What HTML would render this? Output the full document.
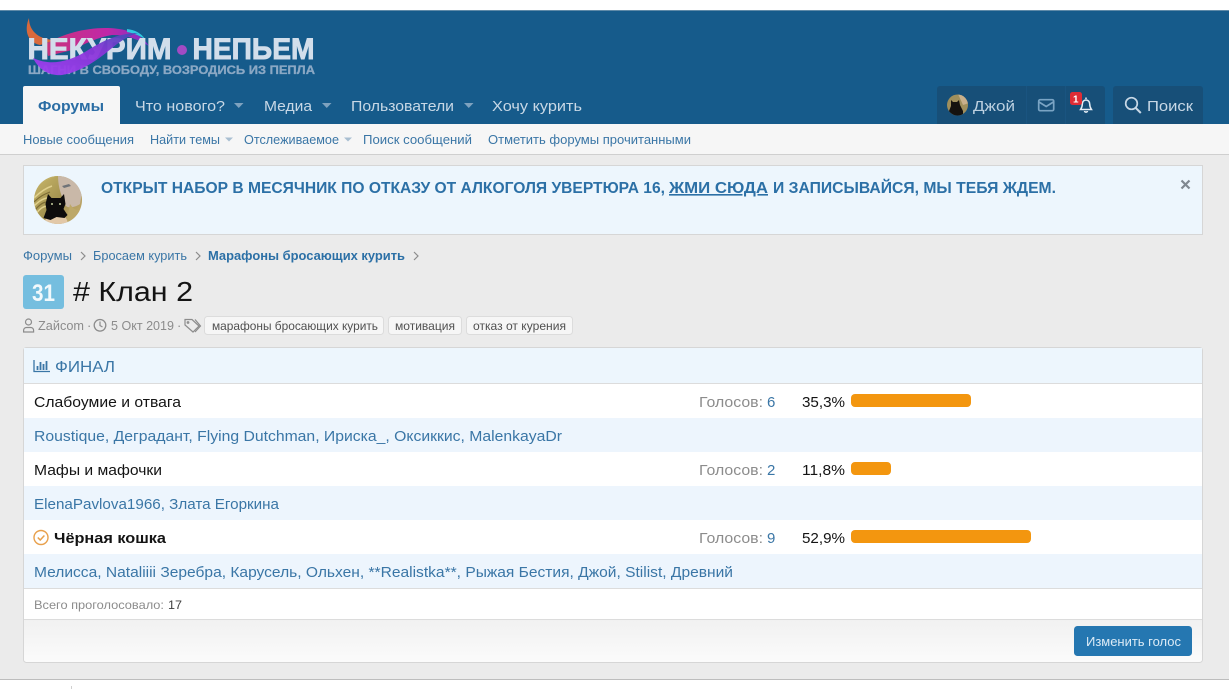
<!DOCTYPE html>
<html lang="ru"><head><meta charset="utf-8"><title>Клан 2</title>
<style>
html,body{margin:0;padding:0;width:1229px;height:689px;overflow:hidden;background:#fff}
svg{display:block}
text{font-family:"Liberation Sans","Noto Sans CJK SC",sans-serif;white-space:pre}
</style></head><body>
<svg width="1229" height="689" viewBox="0 0 1229 689" xmlns="http://www.w3.org/2000/svg">
<defs>
<linearGradient id="sw" x1="0" y1="1" x2="1" y2="0"><stop offset="0" stop-color="#a040f4"/><stop offset=".6" stop-color="#8a35d8"/><stop offset="1" stop-color="#3f4fb4"/></linearGradient>
<linearGradient id="pk" x1="0" y1="0" x2="1" y2="0"><stop offset="0" stop-color="#c8347c"/><stop offset=".6" stop-color="#c028a8"/><stop offset="1" stop-color="#7a30c8"/></linearGradient>
<linearGradient id="ft" x1="0" y1="0" x2="0" y2="1"><stop offset="0" stop-color="#f1f1f1"/><stop offset="1" stop-color="#fbfbfb"/></linearGradient>
<linearGradient id="hair" x1="0" y1="0" x2="1" y2="1"><stop offset="0" stop-color="#c9b76a"/><stop offset=".5" stop-color="#a49350"/><stop offset="1" stop-color="#c9ae72"/></linearGradient>
<clipPath id="av"><circle cx="58" cy="200" r="24"/></clipPath>
<clipPath id="av2"><circle cx="957.500" cy="105" r="10.500"/></clipPath>
</defs>

<rect x="0" y="0" width="1229" height="689" fill="#ebebeb"/>
<rect x="0" y="0" width="1229" height="10" fill="#fff"/>
<rect x="0" y="10" width="1229" height="114" fill="#165b8b"/>
<rect x="0" y="10" width="1229" height="1" fill="#5f8aa8"/>

<!-- logo -->
<text x="28" y="74" font-size="12" font-weight="700" fill="#8ba8c4" stroke="#8ba8c4" stroke-width=".3" textLength="287" lengthAdjust="spacingAndGlyphs">ШАГНИ В СВОБОДУ, ВОЗРОДИСЬ ИЗ ПЕПЛА</text>
<path d="M29 18C24 30 27 42 40 45L56 40C40 40 29 32 29 18Z" fill="#d8693c"/>
<path d="M46 44C62 34 85 28 105 28C125 28 141 33 149 46C136 38 125 35 112 35C98 37 85 44 72 50L48 56Z" fill="url(#pk)"/>
<path d="M127 29C135 30 141 33 145 39C138 35 133 33 127 32Z" fill="#2fc8e0"/>
<g font-size="30" font-weight="700" fill="#d2deeb" stroke="#d2deeb" stroke-width=".9">
<text x="27.500" y="59" textLength="144" lengthAdjust="spacingAndGlyphs">НЕКУРИМ</text>
<text x="192.500" y="59" textLength="122" lengthAdjust="spacingAndGlyphs">НЕПЬЕМ</text>
</g>
<circle cx="182" cy="50" r="5" fill="#a24bc4"/>
<path d="M33 58C40 72 52 76 62 75C82 72 100 58 112 48C122 40 130 35 138 33C118 33 100 42 85 52C68 62 50 66 33 58Z" fill="url(#sw)" opacity=".95"/>

<!-- nav -->
<path d="M23 124V88a2 2 0 0 1 2-2H118a2 2 0 0 1 2 2V124Z" fill="#f6f6f6"/>
<text x="38" y="111" font-size="15" font-weight="700" fill="#2a6da4" textLength="66" lengthAdjust="spacingAndGlyphs">Форумы</text>
<g font-size="15" fill="#c8d8e6">
<text x="135" y="111" textLength="90" lengthAdjust="spacingAndGlyphs">Что нового?</text>
<text x="264" y="111" textLength="48" lengthAdjust="spacingAndGlyphs">Медиа</text>
<text x="351" y="111" textLength="103" lengthAdjust="spacingAndGlyphs">Пользователи</text>
<text x="492" y="111" textLength="90" lengthAdjust="spacingAndGlyphs">Хочу курить</text>
</g>
<g fill="#7ea2bf"><path d="M234 103h9.500l-4.750 5Z"/><path d="M322 103h9.500l-4.750 5Z"/><path d="M464 103h9.500l-4.750 5Z"/></g>

<!-- user box -->
<path d="M937 124V89a3 3 0 0 1 3-3H1102a3 3 0 0 1 3 3V124Z" fill="#174f78"/>
<path d="M1113 124V89a3 3 0 0 1 3-3H1200a3 3 0 0 1 3 3V124Z" fill="#174f78"/>
<rect x="1026" y="86" width="1" height="38" fill="#1a5480"/>
<rect x="1065" y="86" width="1" height="38" fill="#1a5480"/>
<g clip-path="url(#av2)">
<rect x="946" y="94" width="23" height="23" fill="#a08f5c"/>
<path d="M958 94h11v9l-6 2Z" fill="#c9b08c"/>
<path d="M951 100l2 2h4l2-2 1 5 3 6v6h-14v-6l2-5Z" fill="#15120f"/>
</g>
<text x="973" y="111" font-size="15" fill="#bcd0e0" textLength="42" lengthAdjust="spacingAndGlyphs">Джой</text>
<rect x="1038.700" y="99.700" width="15" height="11" rx="1.500" fill="none" stroke="#7aa4c4" stroke-width="1.700"/>
<path d="M1039 102l7.200 4.500 7.200-4.500" fill="none" stroke="#7aa4c4" stroke-width="1.700"/>
<path d="M1086 97.500v1.500m-5.500 10.500c1-1.500 1.800-2.500 1.800-5.500c0-2.500 1.700-4 3.700-4s3.700 1.500 3.700 4c0 3 .8 4 1.800 5.500Zm4 1.500c.3 1.500 2.700 1.500 3 0" fill="none" stroke="#e6eef5" stroke-width="1.500"/>
<rect x="1070" y="92" width="12" height="13" rx="2.500" fill="#df2c35"/>
<text x="1073" y="102.500" font-size="10" font-weight="700" fill="#fff" textLength="5.500" lengthAdjust="spacingAndGlyphs">1</text>
<circle cx="1131.500" cy="103.500" r="5.800" fill="none" stroke="#c8d8e6" stroke-width="1.700"/>
<path d="M1135.800 108l5 5" stroke="#c8d8e6" stroke-width="2"/>
<text x="1147" y="111" font-size="15" fill="#c8d8e6" textLength="46" lengthAdjust="spacingAndGlyphs">Поиск</text>

<!-- subnav -->
<rect x="0" y="124" width="1229" height="30" fill="#f6f6f6"/>
<rect x="0" y="154" width="1229" height="1" fill="#cfcfcf"/>
<g font-size="13" fill="#3a76a6">
<text x="23" y="144" textLength="111" lengthAdjust="spacingAndGlyphs">Новые сообщения</text>
<text x="150" y="144" textLength="70" lengthAdjust="spacingAndGlyphs">Найти темы</text>
<text x="244" y="144" textLength="95" lengthAdjust="spacingAndGlyphs">Отслеживаемое</text>
<text x="363" y="144" textLength="109" lengthAdjust="spacingAndGlyphs">Поиск сообщений</text>
<text x="488" y="144" textLength="203" lengthAdjust="spacingAndGlyphs">Отметить форумы прочитанными</text>
</g>
<g fill="#a9bfd1"><path d="M225 137.500h8l-4 4Z"/><path d="M344 137.500h8l-4 4Z"/></g>

<!-- notice -->
<rect x="23.500" y="165.500" width="1179" height="69" fill="#edf6fd" stroke="#d6d6d6"/>
<g clip-path="url(#av)">
<rect x="34" y="176" width="48" height="48" fill="url(#hair)"/>
<path d="M34 190C42 182 50 178 58 176H34Z" fill="#bfae66"/>
<path d="M34 198C40 192 46 188 52 186M34 206C40 200 44 198 48 198M36 214C40 208 44 206 48 206" fill="none" stroke="#e0d08c" stroke-width="1.500"/>
<path d="M34 202C40 196 45 194 50 192M35 210C40 204 44 202 47 202" fill="none" stroke="#7d6c34" stroke-width="1.200"/>
<path d="M58 176C68 176 78 182 82 192L80 204C74 208 68 208 66 206C62 198 58 188 58 176Z" fill="#c9b8a8"/>
<path d="M62 186l7-2 2 2-7 2Z" fill="#6f7378"/>
<path d="M70 204C74 210 78 212 82 208V224H66Z" fill="#bda868"/>
<path d="M44 224c1-7 6-9 14-9 7 0 9 3 10 9Z" fill="#e2c8a8"/>
<path d="M48 194l3.500 4h9l3.500-4 1.500 10-2 5 4 6-3 3-8-1-6 3-7-2 3-8-1-6Z" fill="#0e0c0c"/>
<circle cx="52" cy="204" r="1" fill="#c8d0a0"/><circle cx="60" cy="204" r="1" fill="#c8d0a0"/>
</g>
<g font-size="16" font-weight="700" fill="#2c70a6">
<text x="101" y="193" textLength="564" lengthAdjust="spacingAndGlyphs">ОТКРЫТ НАБОР В МЕСЯЧНИК ПО ОТКАЗУ ОТ АЛКОГОЛЯ УВЕРТЮРА 16,</text>
<text x="669" y="193" textLength="99" lengthAdjust="spacingAndGlyphs" text-decoration="underline">ЖМИ СЮДА</text>
<text x="773" y="193" textLength="283" lengthAdjust="spacingAndGlyphs">И ЗАПИСЫВАЙСЯ, МЫ ТЕБЯ ЖДЕМ.</text>
</g>
<path d="M1181.500 180.500l8 8m0-8l-8 8" stroke="#808890" stroke-width="2.200"/>

<!-- breadcrumb -->
<g font-size="13" fill="#3a76a6">
<text x="23" y="260" textLength="49" lengthAdjust="spacingAndGlyphs">Форумы</text>
<text x="93" y="260" textLength="94" lengthAdjust="spacingAndGlyphs">Бросаем курить</text>
<text x="208" y="260" font-weight="700" fill="#2c70a6" textLength="197" lengthAdjust="spacingAndGlyphs">Марафоны бросающих курить</text>
</g>
<g fill="none" stroke="#8c8c8c" stroke-width="1.200"><path d="M81 252l4 4-4 4"/><path d="M196 252l4 4-4 4"/><path d="M414 252l4 4-4 4"/></g>

<!-- title -->
<rect x="23" y="275" width="41" height="34" rx="3" fill="#75bedf"/>
<text x="32" y="301" font-size="24" font-weight="700" fill="#f2f9fc" textLength="23" lengthAdjust="spacingAndGlyphs">31</text>
<text x="73" y="301" font-size="28" fill="#141414" textLength="120" lengthAdjust="spacingAndGlyphs"># Клан 2</text>

<!-- meta -->
<g fill="none" stroke="#8c8c8c" stroke-width="1.200">
<circle cx="28.500" cy="322" r="3"/><path d="M23.600 332v-1.500c0-2 1.500-3 3-3h4c1.500 0 3 1 3 3v1.500Z"/>
<circle cx="100" cy="325.300" r="5.800" stroke-width="1.300"/><path d="M100 321.500v4l2.500 1.500"/>
<path d="M185 319.500h7l7 6.500-6 6-8-7Z"/><path d="M195 319.500l5.500 6.500-5.500 6"/><circle cx="188" cy="322.500" r=".8"/>
</g>
<g font-size="13" fill="#8c8c8c">
<text x="38" y="330" textLength="46" lengthAdjust="spacingAndGlyphs">Zайcom</text>
<text x="87" y="330">·</text>
<text x="111" y="330" textLength="63" lengthAdjust="spacingAndGlyphs">5 Окт 2019</text>
<text x="177" y="330">·</text>
</g>
<g fill="#f6f6f6" stroke="#dcdcdc">
<rect x="204.500" y="316.500" width="179" height="18" rx="3"/>
<rect x="388.500" y="316.500" width="73" height="18" rx="3"/>
<rect x="466.500" y="316.500" width="106" height="18" rx="3"/>
</g>
<g font-size="12" fill="#505050">
<text x="212" y="330" textLength="166" lengthAdjust="spacingAndGlyphs">марафоны бросающих курить</text>
<text x="395" y="330" textLength="60" lengthAdjust="spacingAndGlyphs">мотивация</text>
<text x="473" y="330" textLength="93" lengthAdjust="spacingAndGlyphs">отказ от курения</text>
</g>

<!-- poll block -->
<rect x="23.500" y="347.500" width="1179" height="315" rx="3" fill="#fff" stroke="#d6d6d6"/>
<rect x="24" y="348" width="1178" height="35" fill="#edf6fd"/>
<rect x="24" y="383" width="1178" height="1" fill="#dcdcdc"/>
<g fill="#edf5fd">
<rect x="24" y="418" width="1178" height="34"/>
<rect x="24" y="486" width="1178" height="34"/>
<rect x="24" y="554" width="1178" height="34"/>
</g>
<rect x="24" y="588" width="1178" height="1" fill="#dcdcdc"/>
<rect x="24" y="619" width="1178" height="1" fill="#dcdcdc"/>
<path d="M24 620H1202V659a3 3 0 0 1-3 3H27a3 3 0 0 1-3-3Z" fill="url(#ft)"/>

<path d="M34 360v11.500h16" fill="none" stroke="#3a76a6" stroke-width="1.300"/>
<path d="M37.500 366v4M40.500 362v8M43.500 364v6M46.500 361v9" stroke="#3a76a6" stroke-width="1.800"/>
<text x="55" y="372" font-size="16" fill="#3a76a6" textLength="60" lengthAdjust="spacingAndGlyphs">ФИНАЛ</text>

<g font-size="15" fill="#141414">
<text x="34" y="407" textLength="147" lengthAdjust="spacingAndGlyphs">Слабоумие и отвага</text>
<text x="34" y="475" textLength="128" lengthAdjust="spacingAndGlyphs">Мафы и мафочки</text>
<text x="54" y="543" font-weight="700" textLength="112" lengthAdjust="spacingAndGlyphs">Чёрная кошка</text>
<text x="802" y="407" textLength="43" lengthAdjust="spacingAndGlyphs">35,3%</text>
<text x="802" y="475" textLength="43" lengthAdjust="spacingAndGlyphs">11,8%</text>
<text x="802" y="543" textLength="43" lengthAdjust="spacingAndGlyphs">52,9%</text>
</g>
<circle cx="41" cy="537.500" r="7" fill="none" stroke="#e8a04c" stroke-width="1.400"/>
<path d="M37.800 537.500l2.400 2.500 4.200-4.500" fill="none" stroke="#e8a04c" stroke-width="1.500"/>
<g font-size="15" fill="#8c8c8c">
<text x="699" y="407" textLength="64" lengthAdjust="spacingAndGlyphs">Голосов:</text>
<text x="699" y="475" textLength="64" lengthAdjust="spacingAndGlyphs">Голосов:</text>
<text x="699" y="543" textLength="64" lengthAdjust="spacingAndGlyphs">Голосов:</text>
</g>
<g font-size="15" fill="#3a76a6">
<text x="767" y="407">6</text><text x="767" y="475">2</text><text x="767" y="543">9</text>
<text x="34" y="441" textLength="528" lengthAdjust="spacingAndGlyphs">Roustique, Деградант, Flying Dutchman, Ириска_, Оксиккис, MalenkayaDr</text>
<text x="34" y="509" textLength="245" lengthAdjust="spacingAndGlyphs">ElenaPavlova1966, Злата Егоркина</text>
<text x="34" y="577" textLength="699" lengthAdjust="spacingAndGlyphs">Мелисса, Nataliiii Зеребра, Карусель, Ольхен, **Realistka**, Рыжая Бестия, Джой, Stilist, Древний</text>
</g>
<g fill="#f3960f">
<rect x="851" y="394" width="120" height="13" rx="4"/>
<rect x="851" y="462" width="40" height="13" rx="4"/>
<rect x="851" y="530" width="180" height="13" rx="4"/>
</g>
<text x="34" y="609" font-size="12" fill="#8c8c8c" textLength="130" lengthAdjust="spacingAndGlyphs">Всего проголосовало:</text>
<text x="168" y="609" font-size="12" fill="#404040" textLength="14" lengthAdjust="spacingAndGlyphs">17</text>

<rect x="1074" y="626" width="118" height="30" rx="3.500" fill="#2577b1"/>
<text x="1086" y="646" font-size="13" fill="#dcebf6" textLength="95" lengthAdjust="spacingAndGlyphs">Изменить голос</text>

<!-- footer edge -->
<rect x="0" y="679" width="1229" height="10" fill="#fff"/>
<rect x="0" y="679" width="1229" height="1" fill="#bdbdbd"/>
<rect x="71" y="686" width="1" height="3" fill="#d0d0d0"/>
</svg>
</body></html>
